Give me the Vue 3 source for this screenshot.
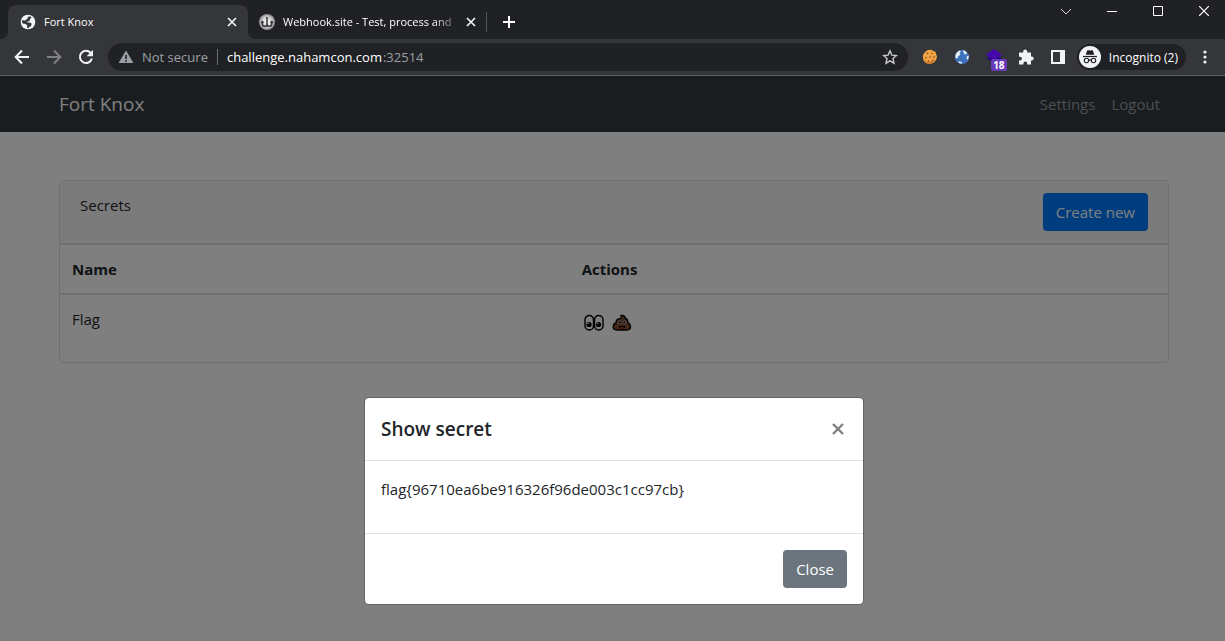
<script setup>
import { ref } from 'vue'

const address = ref('challenge.nahamcon.com')
const secrets = [{ name: 'Flag' }]
const open = ref(true)
</script>

<template>
  <div class="window">
    <header class="tabstrip">
      <div class="tab active">
        <svg class="favicon" viewBox="0 0 16 16" aria-hidden="true">
          <circle cx="8" cy="8" r="7.300" fill="#f1f3f4" />
          <path d="M8.500 2.400h2.300l.6 1.400-1.500 1.500-.3 1.600-2.300.5.1 1.100h2.700l1.500 1.300-.5 2.200-1.700.9-.8 1.200-1.600-.3.200-2.600-1.700-1.100-2.800-.5-.8-1.900.2-1.500 3.200.2 1.700-1.300z" fill="#35363a" />
        </svg>
        <span class="tab-title">Fort Knox</span>
        <button class="tab-close" aria-label="Close tab">
          <svg width="10" height="10" viewBox="0 0 10 10"><path d="M1 1l8 8M9 1l-8 8" stroke="#f1f3f4" stroke-width="1.7" /></svg>
        </button>
      </div>
      <div class="tab second">
        <svg class="favicon" viewBox="0 0 16 16" aria-hidden="true">
          <defs>
            <radialGradient id="hook"><stop offset="0" stop-color="#fff" /><stop offset=".6" stop-color="#d0d0d0" /><stop offset="1" stop-color="#8b8b8b" /></radialGradient>
          </defs>
          <circle cx="8" cy="8" r="8" fill="url(#hook)" />
          <path d="M8 3v8M3.300 8v1.500q0 2.800 2.500 2.800 2.200 0 2.200-2 0 2 2.300 2 2.500 0 2.500-2.800V8M2.300 9.200l1-1.700 1.200 1.500M11.500 9l1.300-1.500 1 1.700" fill="none" stroke="#35363a" stroke-width="1.500" />
        </svg>
        <span class="tab-title fade">Webhook.site - Test, process and</span>
        <button class="tab-close" aria-label="Close tab">
          <svg width="10" height="10" viewBox="0 0 10 10"><path d="M1 1l8 8M9 1l-8 8" stroke="#f1f3f4" stroke-width="1.7" /></svg>
        </button>
      </div>
      <button class="new-tab" aria-label="New tab">
        <svg width="12" height="12" viewBox="0 0 12 12"><path d="M6 0v12M0 6h12" stroke="#fff" stroke-width="2" /></svg>
      </button>
      <div class="window-controls">
        <button aria-label="Search tabs"><svg width="10" height="10" viewBox="0 0 10 10"><path d="M0 3l5 5 5-5" fill="none" stroke="#d5d5d6" /></svg></button>
        <button aria-label="Minimize"><svg width="10" height="10" viewBox="0 0 10 10"><path d="M0 5.5h10" stroke="#fff" /></svg></button>
        <button aria-label="Maximize"><svg width="10" height="10" viewBox="0 0 10 10"><path d="M.5.5h9v9h-9z" fill="none" stroke="#fff" /></svg></button>
        <button aria-label="Close window"><svg width="10" height="10" viewBox="0 0 10 10"><path d="M0 0l10 10M10 0L0 10" stroke="#fff" stroke-width="1.2" /></svg></button>
      </div>
    </header>

    <div class="toolbar">
      <button class="tool" aria-label="Back">
        <svg width="16" height="16" viewBox="0 0 16 16"><path d="M15 8H2M8 1.5L1.7 8 8 14.5" fill="none" stroke="#f1f3f4" stroke-width="2" /></svg>
      </button>
      <button class="tool" aria-label="Forward">
        <svg width="16" height="16" viewBox="0 0 16 16"><path d="M1 8h13M8 1.5L14.3 8 8 14.5" fill="none" stroke="#818286" stroke-width="2" /></svg>
      </button>
      <button class="tool" aria-label="Reload">
        <svg width="16" height="16" viewBox="0 0 16 16"><path d="M13.9 9.6A6.1 6.1 0 1 1 12.6 3.9" fill="none" stroke="#f1f3f4" stroke-width="2" /><path d="M15 .8v6.4H8.6z" fill="#f1f3f4" /></svg>
      </button>
      <div class="omnibox">
        <button class="security">
          <svg width="16" height="16" viewBox="0 0 16 16" aria-hidden="true"><path d="M8 1.5L.6 14h14.8z" fill="#9aa0a6" /><path d="M8 6v4M8 11v1.8" stroke="#202124" stroke-width="1.6" /></svg>
          <span>Not secure</span>
        </button>
        <span class="divider"></span>
        <input v-model="address" class="address" aria-label="Address" /><span class="port">:32514</span>
        <button class="star" aria-label="Bookmark this page">
          <svg width="16" height="16" viewBox="0 0 16 16"><path d="M8 1.8l1.9 4.3 4.6.4-3.5 3.1 1 4.6L8 11.8l-4 2.4 1-4.6L1.500 6.500l4.600-.4z" fill="none" stroke="#c8cacd" stroke-width="1.4" /></svg>
        </button>
      </div>
      <div class="extensions">
        <button class="tool" aria-label="Cookie editor">
          <svg width="16" height="16" viewBox="0 0 16 16"><path d="M6 1q4-1 5 1 3 0 3 3 2 3-.2 6-2 4-6.500 3.800Q2 14.500 1.200 10 0 6 2.800 3.500 4 1.500 6 1z" fill="#f0a445" /><path d="M2 11q5 4 11-1-2 5-6 4.800Q3.500 14.500 2 11z" fill="#d5782a" /><g fill="#7a4018"><circle cx="5.500" cy="4.500" r=".8" /><circle cx="10" cy="4.500" r=".7" /><circle cx="4" cy="8.500" r=".8" /><circle cx="8" cy="8" r=".8" /><circle cx="12" cy="8" r=".8" /><circle cx="6.500" cy="12" r=".7" /><circle cx="10.500" cy="11.500" r=".7" /></g></svg>
        </button>
        <button class="tool" aria-label="Proxy">
          <svg width="16" height="16" viewBox="0 0 16 16"><circle cx="8" cy="8" r="7.200" fill="#3f72bd" /><path d="M1.500 6Q2.500 2.500 5.500 1.500L7 2.500 5.500 4l1 1.500L4 7.500l-.5 2L1.500 9zM8.500 1.200q3 .3 4.500 2.300l-1 2-2-.5-.5-2zM13 7l1.800-.5q.2 3-1.300 4.500l-1-2zM4.500 12.500l2 0 1.500 1-.5 1.200Q5.500 14.500 4 13z" fill="#e4eff8" /></svg>
        </button>
        <button class="tool" aria-label="Wappalyzer, 18 technologies">
          <svg width="18" height="16" viewBox="0 0 18 16"><path d="M1 9l3-1.500L9 10l5-2.500L17 9l-8 5z" fill="#2a0a80" /><path d="M9 0l8 5.500L9 11 1 5.500z" fill="#4608ad" /></svg>
          <span class="count">18</span>
        </button>
        <button class="tool" aria-label="Extensions">
          <svg width="16" height="16" viewBox="0 0 16 16"><path d="M1 3.500h4.200V2.600a2 2 0 0 1 4 0v.9H13v4h.7a2 2 0 0 1 0 4H13v4H9.200v-1a1.900 1.900 0 0 0-3.800 0v1H1v-4h1a1.900 1.900 0 0 0 0-3.800H1z" fill="#f1f3f4" /></svg>
        </button>
        <button class="tool" aria-label="Side panel">
          <svg width="14" height="14" viewBox="0 0 14 14"><path d="M0 0h14v14H0zM2 2v10h7V2z" fill="#f1f3f4" fill-rule="evenodd" /></svg>
        </button>
      </div>
      <button class="incognito">
        <svg width="22" height="22" viewBox="0 0 22 22" aria-hidden="true"><circle cx="11" cy="11" r="11" fill="#f1f3f4" /><path d="M6.800 8.700L8 4.800q.3-.8 1.200-.6l1.800.4 1.800-.4q.9-.2 1.200.6l1.200 3.900z" fill="#202124" /><path d="M4 10.500h14" stroke="#202124" stroke-width="1.200" /><g fill="none" stroke="#202124" stroke-width="1.100"><circle cx="7.500" cy="14.500" r="2.200" /><circle cx="14.500" cy="14.500" r="2.200" /><path d="M9.700 14.300q1.300-.8 2.600 0" /></g></svg>
        <span>Incognito (2)</span>
      </button>
      <button class="tool" aria-label="Menu">
        <svg width="4" height="14" viewBox="0 0 4 14" fill="#f1f3f4"><circle cx="2" cy="2" r="1.600" /><circle cx="2" cy="7" r="1.600" /><circle cx="2" cy="12" r="1.600" /></svg>
      </button>
    </div>

    <div class="page">
      <nav class="navbar">
        <div class="container nav-inner">
          <a class="brand" href="#">Fort Knox</a>
          <div class="nav-links"><a href="#">Settings</a><a href="#">Logout</a></div>
        </div>
      </nav>
      <main class="container">
        <section class="card">
          <div class="card-header">
            <span>Secrets</span>
            <button class="btn primary">Create new</button>
          </div>
          <table>
            <thead><tr><th>Name</th><th>Actions</th></tr></thead>
            <tbody>
              <tr v-for="secret in secrets" :key="secret.name">
                <td>{{ secret.name }}</td>
                <td>
                  <div class="actions">
                    <button aria-label="Show secret" @click="open = true">
                      <svg width="20" height="18" viewBox="0 0 20 18"><g fill="#fff" stroke="#000" stroke-width="1.400"><rect x="1" y="1.500" width="8.500" height="14.500" rx="4.200" /><rect x="10.500" y="1.500" width="8.500" height="14.500" rx="4.200" /></g><circle cx="5" cy="10.500" r="2.600" /><circle cx="14.500" cy="10.500" r="2.600" /><circle cx="4.200" cy="9.500" r=".8" fill="#fff" /><circle cx="13.700" cy="9.500" r=".8" fill="#fff" /></svg>
                    </button>
                    <button aria-label="Delete secret">
                      <svg width="20" height="18" viewBox="0 0 20 18"><path d="M9 1.500q4-.5 4.500 3 2.500.5 2.300 4 2.700 1 2.700 4.300 0 3.200-3.500 3.200H5q-3.800 0-3.800-3.200 0-3.300 2.900-3.800-.3-3.500 2.700-4Q10 4.200 9 1.500z" fill="#8a5038" stroke="#000" stroke-width="1.300" /><circle cx="7.500" cy="8.300" r="1.700" fill="#bbb" /><circle cx="12.500" cy="8.300" r="1.700" fill="#bbb" /><circle cx="7.700" cy="8.300" r="1" /><circle cx="12.300" cy="8.300" r="1" /><path d="M6.500 12h7q-.7 3-3.500 3t-3.500-3z" fill="#000" /><path d="M8 13.200h4q-.5 1.800-2 1.800t-2-1.800z" fill="#f03a30" /></svg>
                    </button>
                  </div>
                </td>
              </tr>
            </tbody>
          </table>
        </section>
      </main>

      <div v-if="open" class="backdrop">
        <div class="modal" role="dialog" aria-labelledby="modal-title">
          <div class="modal-header">
            <h5 id="modal-title">Show secret</h5>
            <button class="dismiss" aria-label="Dismiss" @click="open = false">
              <svg width="12" height="12" viewBox="0 0 12 12"><path d="M1 1l10 10M11 1L1 11" stroke="#808080" stroke-width="2.400" /></svg>
            </button>
          </div>
          <div class="modal-body"><p>flag{96710ea6be916326f96de003c1cc97cb}</p></div>
          <div class="modal-footer"><button class="btn secondary" @click="open = false">Close</button></div>
        </div>
      </div>
    </div>
  </div>
</template>

<style>
body { margin: 0; }
</style>

<style scoped>
* { box-sizing: border-box; }
button { border: 0; padding: 0; background: none; color: inherit; font: inherit; }
svg { display: block; flex: none; }
a { text-decoration: none; }

.window {
  min-height: 100vh;
  display: flex;
  flex-direction: column;
  background: #fff;
  font-family: "Open Sans", "Noto Sans", sans-serif;
}
.tabstrip {
  display: flex;
  height: 39px;
  padding-left: 8px;
  background: #202124;
  color: #fff;
  font-size: 11px;
}
.tab { position: relative; display: flex; align-items: center; height: 34px; margin-top: 5px; }
.tab.active { width: 240px; padding: 0 11px 0 12px; border-radius: 8px 8px 0 0; background: #35363a; }
.tab.active::before, .tab.active::after {
  content: "";
  position: absolute;
  bottom: 0;
  width: 8px;
  height: 8px;
}
.tab.active::before { left: -8px; background: radial-gradient(circle at 0 0, #202124 8px, #35363a 8px); }
.tab.active::after { right: -8px; background: radial-gradient(circle at 100% 0, #202124 8px, #35363a 8px); }
.tab.second { width: 239px; padding: 0 11px; }
.tab.second::after { content: ""; position: absolute; right: 0; top: 7px; width: 1px; height: 20px; background: #505154; }
.favicon { width: 16px; height: 16px; }
.tab-title { flex: 1; min-width: 0; margin: 0 4px 0 8px; overflow: hidden; white-space: nowrap; line-height: 18px; }
.fade { mask-image: linear-gradient(to right, #000 84%, transparent); }
.tab-close { width: 10px; height: 10px; }
.new-tab { display: grid; place-items: center; width: 28px; margin: 5px 0 0 8px; height: 34px; }
.window-controls { display: flex; margin-left: auto; height: 22px; }
.window-controls button { display: grid; place-items: center; width: 46px; }
.window-controls button:last-child { width: 44px; padding-left: 2px; }

.toolbar {
  display: flex;
  align-items: center;
  height: 37px;
  padding: 0 4px 0 6px;
  border-bottom: 1px solid #606164;
  background: #35363a;
  color: #fff;
  font-size: 13px;
}
.tool { position: relative; display: grid; place-items: center; width: 32px; height: 28px; flex: none; }
.omnibox {
  display: flex;
  align-items: center;
  flex: 1;
  min-width: 0;
  height: 28px;
  margin: 0 6px;
  padding: 0 10px;
  border-radius: 14px;
  background: #202124;
}
.security { display: flex; align-items: center; gap: 8px; color: #9aa0a6; white-space: nowrap; }
.divider { width: 1px; height: 16px; margin: 0 9px; background: #6b6d70; }
.address { width: 156px; padding: 0; border: 0; outline: 0; background: none; color: #fff; font: inherit; }
.port { color: #9aa0a6; }
.star { margin-left: auto; }
.extensions { display: flex; }
.count {
  position: absolute;
  left: 13px;
  top: 16px;
  width: 16px;
  height: 12px;
  border-radius: 2px;
  background: #673ab7;
  font-size: 10px;
  font-weight: 700;
  line-height: 12px;
}
.incognito {
  display: flex;
  align-items: center;
  gap: 8px;
  height: 26px;
  margin: 0 3px;
  padding: 0 8px 0 2px;
  border-radius: 13px;
  background: #202124;
  font-size: 12px;
  white-space: nowrap;
}

.page { position: relative; flex: 1; color: #212529; font-size: 15px; line-height: 24px; }
.container { max-width: 1110px; margin: 0 auto; }
.navbar, main { padding-left: 3px; }
.navbar { background: #343a40; }
.nav-inner { display: flex; align-items: center; justify-content: space-between; height: 56px; padding-right: 9px; }
.brand { color: #fff; font-size: 19px; }
.nav-links { display: flex; gap: 16px; color: #9a9da0; }
.nav-links a { color: inherit; }
main.container { max-width: 1113px; padding-top: 48px; }
.card { border: 1px solid #dfdfdf; border-radius: 4px; }
.card-header {
  display: flex;
  justify-content: space-between;
  align-items: flex-start;
  padding: 12px 20px;
  border-bottom: 1px solid #dfdfdf;
  background: #f7f7f7;
}
.btn { height: 38px; padding: 0 13px; border-radius: 4px; color: #fff; }
.primary { background: #007bff; }
.secondary { background: #6c757d; }
table { width: 100%; border-collapse: separate; border-spacing: 0; table-layout: fixed; }
th, td { padding: 12px; text-align: left; vertical-align: top; border-top: 1px solid #dee2e6; }
th { width: 46%; border-bottom: 2px solid #dee2e6; font-weight: 700; }
th + th { width: 54%; }
td { height: 67px; border-top: 0; }
.actions { display: flex; gap: 8px; padding: 7px 0 0 2px; }

.backdrop {
  position: absolute;
  inset: 0;
  display: flex;
  align-items: flex-start;
  justify-content: center;
  padding: 321px 0 36px 3px;
  background: rgba(0, 0, 0, .5);
}
.modal { width: 500px; border: 1px solid rgba(0, 0, 0, .2); border-radius: 5px; background: #fff; background-clip: padding-box; }
.modal-header { display: flex; justify-content: space-between; align-items: center; padding: 16px 19px 16px 16px; border-bottom: 1px solid #dee2e6; }
h5 { margin: 0; font-size: 19px; line-height: 30px; font-weight: 600; }
.modal-body { padding: 16px; }
.modal-body p { margin: 0 0 16px; }
.modal-footer { display: flex; justify-content: flex-end; padding: 16px; border-top: 1px solid #dee2e6; }
</style>
